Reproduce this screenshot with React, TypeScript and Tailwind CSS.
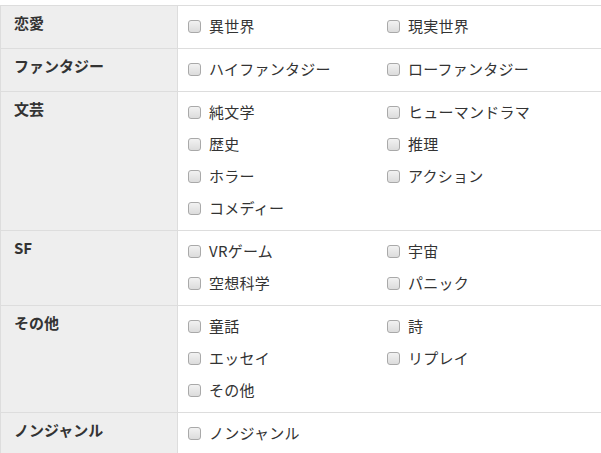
import React from 'react';

interface Genre {
  label: string;
  items: string[];
}

const genres: Genre[] = [
  { label: '恋愛', items: ['異世界', '現実世界'] },
  { label: 'ファンタジー', items: ['ハイファンタジー', 'ローファンタジー'] },
  { label: '文芸', items: ['純文学', 'ヒューマンドラマ', '歴史', '推理', 'ホラー', 'アクション', 'コメディー'] },
  { label: 'SF', items: ['VRゲーム', '宇宙', '空想科学', 'パニック'] },
  { label: 'その他', items: ['童話', '詩', 'エッセイ', 'リプレイ', 'その他'] },
  { label: 'ノンジャンル', items: ['ノンジャンル'] },
];

const CheckItem: React.FC<{ text: string }> = ({ text }) => (
  <label className="flex h-[32px] items-center">
    <span className="ml-[10px] mr-[8px] inline-block h-[13px] w-[13px] rounded-[3px] border border-[#a9a9a9] bg-gradient-to-b from-[#f2f2f2] to-[#dcdcdc]" />
    <span className="tracking-[0.25px]">{text}</span>
  </label>
);

export default function App() {
  return (
    <div
      className="min-h-[453px] w-[601px] overflow-hidden bg-white pt-[5px] text-[15px] text-[#333]"
      style={{ fontFamily: '"Noto Sans CJK JP", "Noto Sans", sans-serif' }}
    >
      <div className="w-[640px] border-t border-l border-[#dddddd]">
        {genres.map((g) => (
          <div key={g.label} className="flex border-b border-[#dddddd]">
            <div className="w-[177px] shrink-0 border-r border-[#dddddd] bg-[#eeeeee] px-[13px] pt-[6px] font-bold leading-[22px]">
              {g.label}
            </div>
            <div className="grid flex-1 grid-cols-[199px_1fr] pt-[4px] pb-[6px]">
              {g.items.map((item) => (
                <CheckItem key={item} text={item} />
              ))}
            </div>
          </div>
        ))}
      </div>
    </div>
  );
}
